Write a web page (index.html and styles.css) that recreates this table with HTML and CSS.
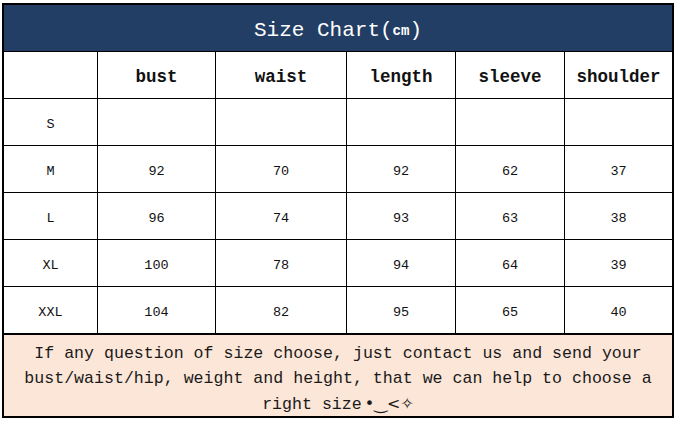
FILE: index.html
```html
<!DOCTYPE html>
<html>
<head>
<meta charset="utf-8">
<link rel="stylesheet" href="styles.css">
</head>
<body>
<div class="sheet">
  <div class="chart">
    <div class="title">Size Chart(<span class="unit">cm</span>)</div>
    <div class="head"></div>
    <div class="head">bust</div>
    <div class="head">waist</div>
    <div class="head">length</div>
    <div class="head">sleeve</div>
    <div class="head">shoulder</div>

    <div class="cell">S</div><div class="cell"></div><div class="cell"></div><div class="cell"></div><div class="cell"></div><div class="cell"></div>
    <div class="cell">M</div><div class="cell">92</div><div class="cell">70</div><div class="cell">92</div><div class="cell">62</div><div class="cell">37</div>
    <div class="cell">L</div><div class="cell">96</div><div class="cell">74</div><div class="cell">93</div><div class="cell">63</div><div class="cell">38</div>
    <div class="cell">XL</div><div class="cell">100</div><div class="cell">78</div><div class="cell">94</div><div class="cell">64</div><div class="cell">39</div>
    <div class="cell">XXL</div><div class="cell">104</div><div class="cell">82</div><div class="cell">95</div><div class="cell">65</div><div class="cell">40</div>

    <div class="note">If any question of size choose, just contact us and send your<br>bust/waist/hip, weight and height, that we can help to choose a<br>right size<span class="emo">•‿&lt;✧</span></div>
  </div>
</div>
</body>
</html>
```
FILE: styles.css
```css
html, body {
  margin: 0;
  padding: 0;
  background: #ffffff;
}
.sheet {
  width: 679px;
  height: 424px;
  padding: 3px 0 0 2px;
  box-sizing: border-box;
}
.chart {
  width: 672px;
  box-sizing: border-box;
  border: 2px solid #000;
  background: #000;
  display: grid;
  grid-template-columns: 93px 117px 130px 108px 108px 107px;
  grid-template-rows: 46px repeat(6, 46px) 82px;
  gap: 1px;
  font-family: "Liberation Mono", "DejaVu Sans Mono", monospace;
  color: #111;
}
.title {
  grid-column: 1 / -1;
  background: #233e64;
  color: #fff;
  font-size: 21px;
  display: flex;
  align-items: center;
  justify-content: center;
  padding-top: 5px;
}
.unit {
  font-size: 14px;
  font-weight: bold;
}
.head {
  background: #fff;
  font-weight: bold;
  font-size: 17.5px;
  display: flex;
  align-items: center;
  justify-content: center;
  padding-top: 4px;
}
.cell {
  background: #fff;
  font-size: 13.5px;
  display: flex;
  align-items: center;
  justify-content: center;
  padding-top: 4px;
}
.note {
  grid-column: 1 / -1;
  background: #fce6d8;
  border-top: 1px solid #000;
  font-size: 16.6px;
  line-height: 25px;
  text-align: center;
  padding-top: 6px;
  color: #1a1a1a;
}
.emo {
  font-family: "DejaVu Sans", sans-serif;
  font-size: 16px;
  margin-left: 3px;
}
```
